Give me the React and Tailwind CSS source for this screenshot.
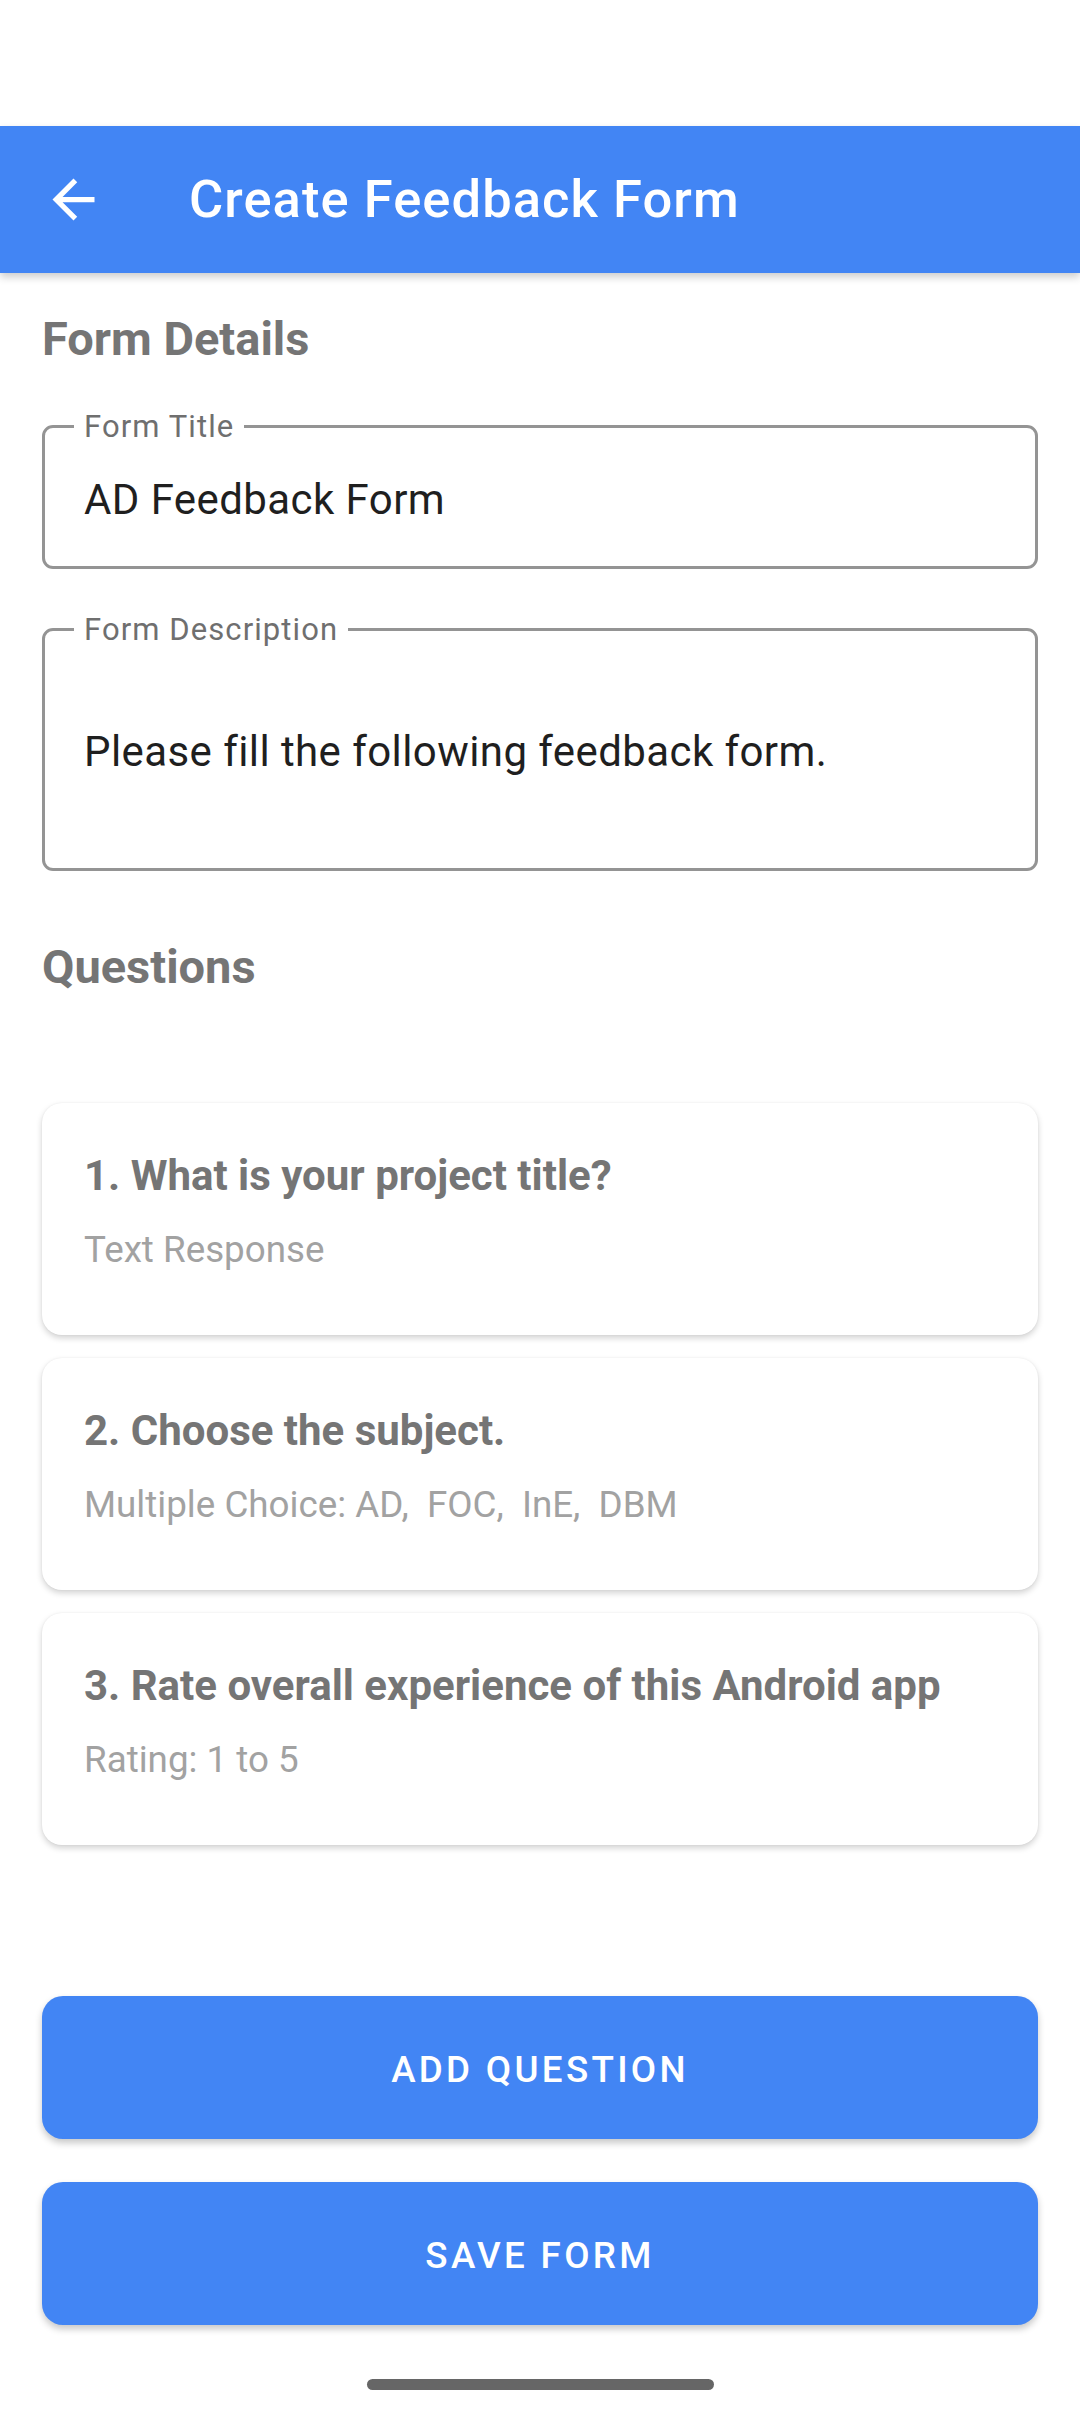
import React from "react";

const questions = [
    { title: "1. What is your project title?", detail: "Text Response" },
    { title: "2. Choose the subject.", detail: "Multiple Choice: AD,  FOC,  InE,  DBM" },
    { title: "3. Rate overall experience of this Android app", detail: "Rating: 1 to 5" },
];

function BackArrow() {
    return (
        <svg viewBox="0 0 24 24" className="w-[63px] h-[63px]" fill="#ffffff">
            <path d="M20 11H7.83l5.59-5.59L12 4l-8 8 8 8 1.41-1.41L7.83 13H20v-2z" />
        </svg>
    );
}

function OutlinedField({ label, value, height }) {
    return (
        <div className={`relative border-[3px] border-[#949494] rounded-[11px] flex items-center pl-[39px] ${height}`}>
            <span className="absolute left-[29px] top-[-17px] bg-white px-[10px] text-[31px] leading-none tracking-[0.035em] text-[#6f6f6f]">
                {label}
            </span>
            <span className="pt-[5px] text-[42px] leading-none tracking-[0.01em] text-[#1f1f1f]">{value}</span>
        </div>
    );
}

function QuestionCard({ title, detail }) {
    return (
        <div className="h-[232px] bg-white rounded-[20px] shadow-[0_3px_6px_rgba(0,0,0,0.18),0_0_2px_rgba(0,0,0,0.06)] pl-[42px] pt-[52px]">
            <div className="text-[42px] leading-none font-bold text-[#757575]">{title}</div>
            <div className="mt-[35px] text-[36.75px] leading-none whitespace-pre text-[#a2a2a2]">{detail}</div>
        </div>
    );
}

function BlueButton({ children }) {
    return (
        <button className="w-full h-[143px] pt-[5px] rounded-[21px] bg-[#4285f4] text-white text-[36.75px] font-medium tracking-[0.09em] uppercase shadow-[0_4px_7px_rgba(0,0,0,0.22)]">
            {children}
        </button>
    );
}

export default function App() {
    return (
        <div className="w-[1080px] h-[2412px] bg-white font-['Roboto',sans-serif] overflow-hidden">
            <div className="h-[126px] bg-white"></div>

            <div className="h-[147px] bg-[#4285f4] flex items-center shadow-[0_4px_8px_rgba(0,0,0,0.2)] relative z-10">
                <div className="ml-[42px]">
                    <BackArrow />
                </div>
                <h1 className="ml-[84px] text-[52.5px] leading-none font-medium tracking-[0.02em] text-white">Create Feedback Form</h1>
            </div>

            <div className="px-[42px]">
                <h2 className="mt-[42px] text-[47px] leading-none font-bold text-[#757575]">Form Details</h2>

                <div className="mt-[63px]">
                    <OutlinedField label="Form Title" value="AD Feedback Form" height="h-[144px]" />
                </div>
                <div className="mt-[59px]">
                    <OutlinedField label="Form Description" value="Please fill the following feedback form." height="h-[243px]" />
                </div>

                <h2 className="mt-[72px] text-[47px] leading-none font-bold text-[#757575]">Questions</h2>

                <div className="mt-[113px] flex flex-col gap-[23px]">
                    {questions.map((q) => (
                        <QuestionCard key={q.title} title={q.title} detail={q.detail} />
                    ))}
                </div>

                <div className="mt-[151px] flex flex-col gap-[43px]">
                    <BlueButton>Add Question</BlueButton>
                    <BlueButton>Save Form</BlueButton>
                </div>

                <div className="mt-[54px] flex justify-center">
                    <div className="w-[347px] h-[11px] rounded-full bg-[#666666]"></div>
                </div>
            </div>
        </div>
    );
}
